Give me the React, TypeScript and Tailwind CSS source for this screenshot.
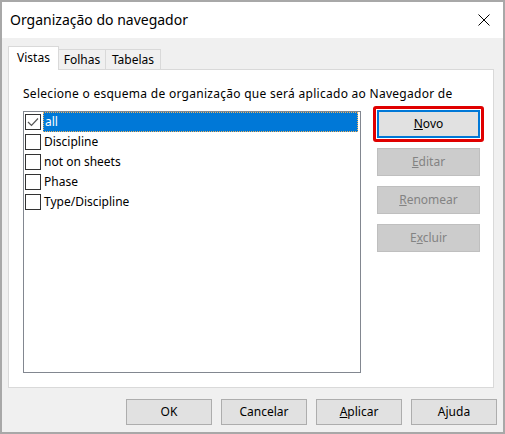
import type { ReactNode } from "react";

const items = ["all", "Discipline", "not on sheets", "Phase", "Type/Discipline"];

function Checkbox({ checked }: { checked: boolean }) {
  return (
    <span className="flex h-[16px] w-[16px] shrink-0 items-center justify-center border border-[#333333] bg-white">
      {checked && (
        <svg width="12" height="10" viewBox="0 0 12 10">
          <path d="M1 5 L4.5 8.5 L11 1.5" fill="none" stroke="#555555" strokeWidth="1.2" />
        </svg>
      )}
    </span>
  );
}

function SideButton({ children, disabled }: { children: ReactNode; disabled?: boolean }) {
  return (
    <div
      className={
        disabled
          ? "flex h-[28px] w-[103px] items-center justify-center border border-[#bfbfbf] bg-[#cccccc] text-[#838383]"
          : "flex h-[28px] w-[103px] items-center justify-center border-2 border-[#0078d7] bg-[#e1e1e1] text-black"
      }
    >
      {children}
    </div>
  );
}

function FooterButton({ children }: { children: ReactNode }) {
  return (
    <div className="flex h-[26px] w-[86px] items-center justify-center border border-[#adadad] bg-[#e1e1e1] text-black">
      {children}
    </div>
  );
}

export default function App() {
  return (
    <div
      className="flex h-[434px] w-[505px] flex-col border-2 border-[#a8a8a8] bg-[#f0f0f0] text-[12px] leading-[16px] text-black"
      style={{ fontFamily: '"Noto Sans", sans-serif' }}
    >
      {/* title bar */}
      <div className="flex h-[36px] shrink-0 items-center justify-between bg-white pl-[8px] pr-[13px]">
        <span className="text-[14px]">Organização do navegador</span>
        <svg width="12" height="12" viewBox="0 0 12 12">
          <path d="M0.5 0.5 L11.5 11.5 M11.5 0.5 L0.5 11.5" stroke="#000" strokeWidth="1" />
        </svg>
      </div>

      <div className="flex flex-1 flex-col pl-[6px] pr-[9px] pt-[8px]">
        {/* tabs */}
        <div className="relative z-10 flex h-[23px] items-end">
          <div className="-mb-px flex h-[24px] w-[51px] items-center justify-center border border-b-0 border-[#d9d9d9] bg-white pb-[2px]">
            Vistas
          </div>
          <div className="flex h-[20px] w-[47px] items-center justify-center border border-b-0 border-l-0 border-[#d9d9d9] bg-[#f0f0f0]">
            Folhas
          </div>
          <div className="flex h-[20px] w-[55px] items-center justify-center border border-b-0 border-l-0 border-[#d9d9d9] bg-[#f0f0f0]">
            Tabelas
          </div>
        </div>

        {/* panel */}
        <div className="flex h-[319px] flex-col border border-[#d9d9d9] bg-white pl-[14px]">
          <div className="mt-[16px] tracking-[0.28px]">
            Selecione o esquema de organização que será aplicado ao Navegador de
          </div>
          <div className="mt-[9px] flex">
            <div className="h-[262px] w-[338px] border border-[#828790] pr-[2px]">
              {items.map((item, i) => (
                <div key={item} className="flex h-[20px] items-center pl-[1px]">
                  <Checkbox checked={i === 0} />
                  <span
                    className={
                      i === 0
                        ? "ml-[2px] flex h-[20px] flex-1 items-center border border-dotted border-[#f2b35a] bg-[#0078d7] pl-[1px] text-white"
                        : "ml-[3px]"
                    }
                  >
                    {item}
                  </span>
                </div>
              ))}
            </div>
            <div className="-mt-[1px] ml-[16px] flex flex-col gap-[10px]">
              <div className="-m-[4px] rounded-[3px] border-[3px] border-[#e00000] p-px">
                <SideButton>
                  <span>
                    <u>N</u>ovo
                  </span>
                </SideButton>
              </div>
              <SideButton disabled>
                <span>
                  <u>E</u>ditar
                </span>
              </SideButton>
              <SideButton disabled>
                <span>
                  <u>R</u>enomear
                </span>
              </SideButton>
              <SideButton disabled>
                <span>
                  E<u>x</u>cluir
                </span>
              </SideButton>
            </div>
          </div>
        </div>

        {/* footer */}
        <div className="mr-[-3px] mt-[11px] flex justify-end gap-[9px]">
          <FooterButton>OK</FooterButton>
          <FooterButton>Cancelar</FooterButton>
          <FooterButton>
            <span>
              <u>A</u>plicar
            </span>
          </FooterButton>
          <FooterButton>Ajuda</FooterButton>
        </div>
      </div>
    </div>
  );
}
